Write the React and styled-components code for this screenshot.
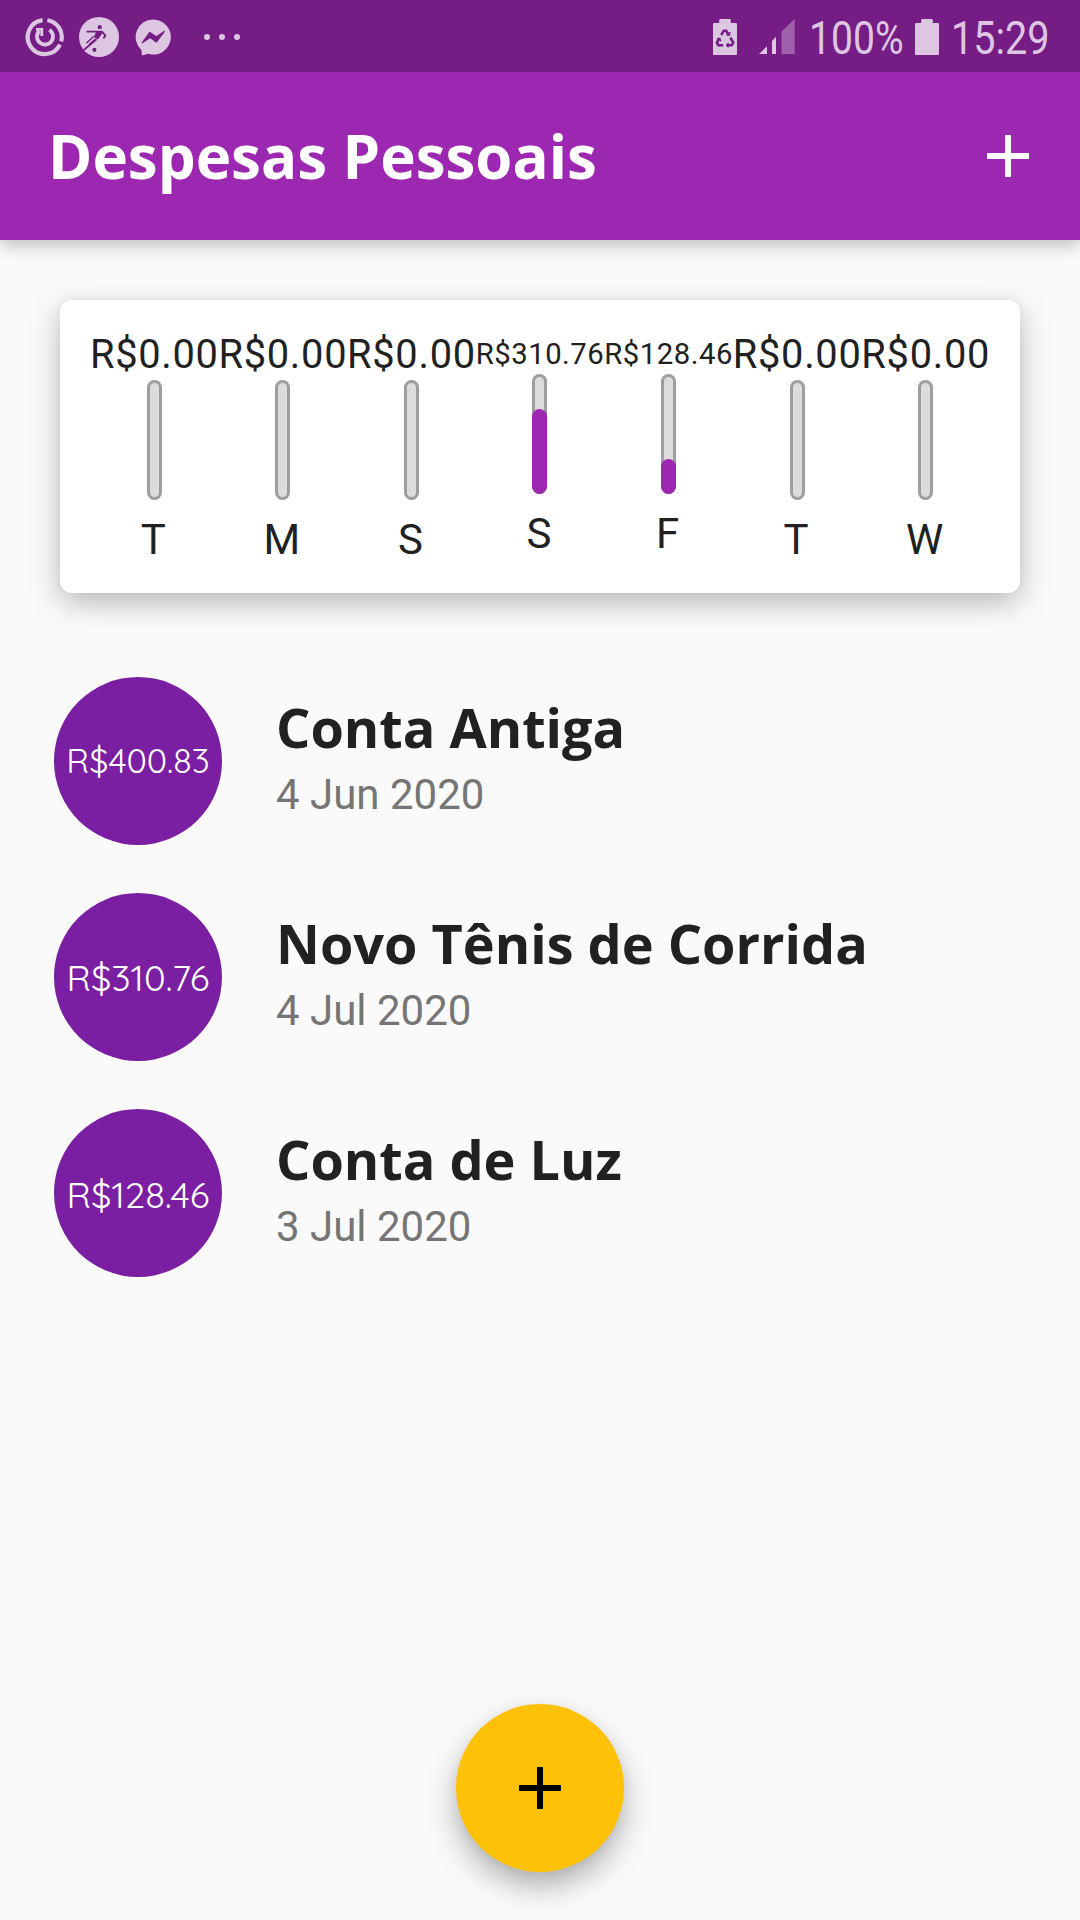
import React from 'react';
import styled, { createGlobalStyle } from 'styled-components';

const GlobalStyle = createGlobalStyle`
  * { box-sizing: border-box; }
  body { margin: 0; background: #fafafa; }
`;

const ink = '#dcc6e1';
const statusPurple = '#751d84';

const Screen = styled.div`
  width: 1080px;
  height: 1920px;
  display: flex;
  flex-direction: column;
  background: #fafafa;
  color: #212121;
  font-family: Roboto, 'Noto Sans', sans-serif;
  overflow: hidden;
`;

const StatusBar = styled.div`
  position: relative;
  height: 72px;
  flex: none;
  display: flex;
  justify-content: space-between;
  background: ${statusPurple};
  color: ${ink};
`;

const StatusGroup = styled.div`
  display: flex;
  align-items: center;
  svg { display: block; flex: none; }
`;

const Notifications = styled(StatusGroup)`
  padding: 2px 0 0 25px;
  gap: 14px;
`;

const Dots = styled.div`
  display: flex;
  gap: 9px;
  margin-left: 17px;
`;

const Dot = styled.span`
  width: 6px;
  height: 6px;
  border-radius: 50%;
  background: ${ink};
`;

const Indicators = styled(StatusGroup)`
  padding: 2px 29px 0 0;
`;

const Slot = styled.div`
  margin-left: ${(p) => p.$gap}px;
`;

const StatusText = styled.div`
  width: ${(p) => p.$width}px;
  margin-left: ${(p) => p.$gap}px;
  padding-top: 2px;
  font-size: 46px;
  line-height: 66px;
  white-space: nowrap;
  transform: scaleX(${(p) => p.$squeeze});
  transform-origin: left center;
`;

const AppBar = styled.header`
  height: 168px;
  flex: none;
  padding: 0 48px;
  display: flex;
  align-items: center;
  justify-content: space-between;
  background: #9c27b0;
  box-shadow: 0 6px 16px rgba(0, 0, 0, 0.23);
`;

const AppTitle = styled.h1`
  margin: 0;
  font: 700 60px/82px 'Open Sans', sans-serif;
  color: #fff;
`;

const IconButton = styled.button`
  width: 48px;
  height: 72px;
  padding: 0;
  border: 0;
  background: none;
  color: #fff;
  display: flex;
  align-items: center;
  justify-content: center;
`;

const ChartCard = styled.section`
  flex: none;
  height: 292.5px;
  margin: 60px;
  padding: 30px;
  border-radius: 12px;
  background: #fff;
  display: grid;
  grid-template-columns: repeat(7, 1fr);
  align-items: center;
  box-shadow: 0 10px 30px rgba(0, 0, 0, 0.26), 0 0 8px rgba(0, 0, 0, 0.04);
`;

const Day = styled.div`
  min-width: 0;
  display: flex;
  flex-direction: column;
  align-items: center;
`;

const DayTotal = styled.div`
  padding-top: ${(p) => (p.$compact ? 1 : 2)}px;
  margin-bottom: ${(p) => (p.$compact ? 2 : 1)}px;
  font-size: ${(p) => (p.$compact ? 29.28 : 39.8)}px;
  letter-spacing: ${(p) => (p.$compact ? 0.52 : 0.71)}px;
  line-height: 1.172;
  white-space: nowrap;
`;

const Track = styled.div`
  width: 15px;
  height: 120px;
  border-radius: 7.5px;
  background: #dcdcdc;
  box-shadow: inset 0 0 0 3px #9e9e9e;
  display: flex;
  align-items: flex-end;
`;

const Fill = styled.div`
  width: 100%;
  border-radius: 7.5px;
  background: #9c27b0;
`;

const DayLabel = styled.div`
  margin: 15.5px 0 -2px;
  padding-right: 2px;
  font-size: 42px;
  line-height: 49px;
`;

const List = styled.ul`
  list-style: none;
  margin: 0;
  padding: 0 54px;
  flex: 1;
`;

const Expense = styled.li`
  height: 216px;
  display: flex;
  align-items: center;
  gap: 54px;
`;

const Amount = styled.div`
  width: 168px;
  height: 168px;
  flex: none;
  border-radius: 50%;
  padding-top: ${(p) => (p.$size < 35 ? 0 : 2)}px;
  display: flex;
  align-items: center;
  justify-content: center;
  background: #7b1fa2;
  color: #fff;
  font: 400 ${(p) => p.$size}px/42px Quicksand, Lato, sans-serif;
`;

const ExpenseText = styled.div`
  display: flex;
  flex-direction: column;
  padding-bottom: 7px;
`;

const ExpenseTitle = styled.h2`
  margin: 0;
  font: 700 54px/74px 'Open Sans', sans-serif;
  white-space: nowrap;
`;

const ExpenseDate = styled.div`
  font-size: 42px;
  line-height: 61px;
  color: #757575;
`;

const Footer = styled.footer`
  flex: none;
  display: flex;
  justify-content: center;
  padding-bottom: 48px;
`;

const Fab = styled.button`
  width: 168px;
  height: 168px;
  padding: 0;
  border: 0;
  border-radius: 50%;
  display: flex;
  align-items: center;
  justify-content: center;
  background: #ffc107;
  color: #000;
  box-shadow: 0 14px 30px rgba(0, 0, 0, 0.3), 0 2px 10px rgba(0, 0, 0, 0.04);
`;

const Plus = () => (
  <svg width="42" height="42" viewBox="0 0 42 42" fill="currentColor">
    <path d="M18 0h6v18h18v6H24v18h-6V24H0v-6h18z" />
  </svg>
);

const PowerIcon = () => (
  <svg width="40" height="40" viewBox="0 0 40 40" fill="none" stroke={ink}>
    <path d="M17.6 3.2A17 17 0 1 0 35 27.6" strokeWidth="4.2" />
    <path d="M22.4 3.2A17 17 0 0 1 36.2 24.4" strokeWidth="4.2" />
    <path d="M14.4 13.8A8 8 0 1 0 24.3 12.8" strokeWidth="3.8" />
    <path d="M11 12.3H16.8v6.7" strokeWidth="2.8" />
  </svg>
);

const FootballIcon = () => (
  <svg width="40" height="40" viewBox="0 0 40 40">
    <circle cx="20" cy="20" r="20" fill={ink} />
    <g fill="none" stroke={statusPurple} strokeLinejoin="round">
      <path d="M7.5 14.6H23l3.5 4-2.2 2.8" strokeWidth="1.7" />
      <path d="M14.5 19.5 7.4 26.2M16.5 22 10 27.5" strokeWidth="1.3" />
      <path d="M17.5 22.2 4.8 33" strokeWidth="1.8" />
    </g>
    <path d="M17.5 14.3h5.3l.8 1.7-4.7 6.4-4.2-2.4z" fill={statusPurple} />
    <circle cx="20.8" cy="10.2" r="2.1" fill={statusPurple} />
    <circle cx="15.4" cy="32.8" r="2.1" fill={statusPurple} />
  </svg>
);

const MessengerIcon = () => (
  <svg width="40" height="40" viewBox="0 0 40 40">
    <path d="M20 2.4a17.6 17.6 0 1 1-5 34.4L8.9 38.4 8.4 33A17.6 17.6 0 0 1 20 2.4z" fill={ink} />
    <path d="M9.2 25.8 16.8 15.4l6.5 4.3 8-5.2-7.8 10.4-6.4-4.4z" fill={statusPurple} stroke={statusPurple} strokeWidth="1.2" strokeLinejoin="round" />
  </svg>
);

const Battery = ({ recycle }) => (
  <svg width="24" height="36" viewBox="0 0 24 36">
    <path d="M7.5 0h9q1.3 0 1.3 1.3V4H23q1 0 1 1v30q0 1-1 1H1q-1 0-1-1V5q0-1 1-1h5.2V1.3Q6.2 0 7.5 0z" fill={ink} />
    {recycle && (
      <g fill="none" stroke={statusPurple} strokeWidth="2.6">
        <path d="M8.2 16 10.8 11.8h2.4l2.2 3.6" />
        <path d="M17.4 18.6 20.2 23.6 18.8 26.2H14" />
        <path d="M10.2 26.2H5.2L3.9 23.8 6.4 19.4" />
        <path d="m13.2 15.8 3.2.4.6-3.2M15.6 24l-2 2.2 2 2.2M3.8 19.8l3-.6 1 3" strokeWidth="1.3" />
      </g>
    )}
  </svg>
);

const Signal = () => (
  <svg width="36" height="36" viewBox="0 0 36 36" fill={ink}>
    <path d="M0 35 8 27.2V35zM13 22l4-4.2V35h-4z" />
    <path d="M22.6 12.5 35.7 0v35H22.6z" fill="#9f62aa" />
  </svg>
);

const days = [
  { label: 'T', total: 0 },
  { label: 'M', total: 0 },
  { label: 'S', total: 0 },
  { label: 'S', total: 310.76 },
  { label: 'F', total: 128.46 },
  { label: 'T', total: 0 },
  { label: 'W', total: 0 },
];
const weekTotal = days.reduce((sum, d) => sum + d.total, 0);

const expenses = [
  { title: 'Conta Antiga', amount: 400.83, date: '4 Jun 2020', size: 34.2 },
  { title: 'Novo Tênis de Corrida', amount: 310.76, date: '4 Jul 2020', size: 36.4 },
  { title: 'Conta de Luz', amount: 128.46, date: '3 Jul 2020', size: 36.5 },
];

export default function App() {
  return (
    <Screen>
      <GlobalStyle />
      <StatusBar>
        <Notifications>
          <PowerIcon />
          <FootballIcon />
          <MessengerIcon />
          <Dots><Dot /><Dot /><Dot /></Dots>
        </Notifications>
        <Indicators>
          <Battery recycle />
          <Slot $gap={22}><Signal /></Slot>
          <StatusText $width={94} $gap={14} $squeeze={0.85}>100%</StatusText>
          <Slot $gap={12}><Battery /></Slot>
          <StatusText $width={100} $gap={12} $squeeze={0.86}>15:29</StatusText>
        </Indicators>
      </StatusBar>
      <AppBar>
        <AppTitle>Despesas Pessoais</AppTitle>
        <IconButton aria-label="Adicionar"><Plus /></IconButton>
      </AppBar>
      <ChartCard>
        {days.map((d, i) => (
          <Day key={i}>
            <DayTotal $compact={d.total > 0}>R${d.total.toFixed(2)}</DayTotal>
            <Track>
              {d.total > 0 && <Fill style={{ height: `${(d.total / weekTotal) * 100}%` }} />}
            </Track>
            <DayLabel>{d.label}</DayLabel>
          </Day>
        ))}
      </ChartCard>
      <List>
        {expenses.map((e) => (
          <Expense key={e.title}>
            <Amount $size={e.size}>R${e.amount.toFixed(2)}</Amount>
            <ExpenseText>
              <ExpenseTitle>{e.title}</ExpenseTitle>
              <ExpenseDate>{e.date}</ExpenseDate>
            </ExpenseText>
          </Expense>
        ))}
      </List>
      <Footer>
        <Fab aria-label="Nova despesa"><Plus /></Fab>
      </Footer>
    </Screen>
  );
}
